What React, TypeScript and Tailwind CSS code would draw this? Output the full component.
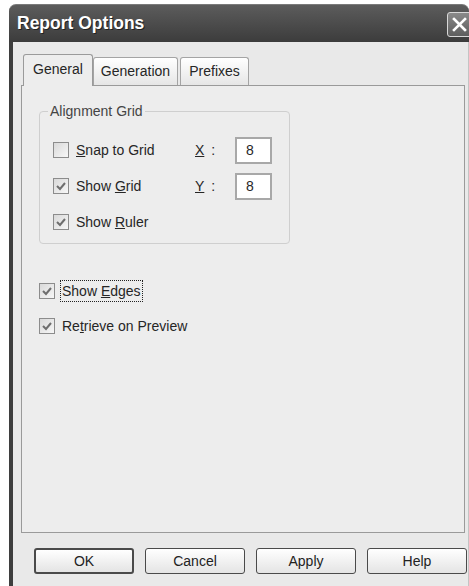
import type { ReactNode } from 'react';

const font = { fontFamily: '"Liberation Sans", Arial, sans-serif' };

function Check({ checked }: { checked: boolean }) {
  return (
    <span className="flex h-[16px] w-[16px] shrink-0 items-center justify-center border border-[#8c8c8c] bg-gradient-to-br from-[#d9d9d9] to-[#f7f7f7]">
      {checked && (
        <svg width="12" height="12" viewBox="0 0 12 12">
          <polyline points="2,6 5,9 10,3" fill="none" stroke="#6e6e6e" strokeWidth="2" />
        </svg>
      )}
    </span>
  );
}

function CheckRow({ checked, focused, children }: { checked: boolean; focused?: boolean; children: ReactNode }) {
  return (
    <div className="flex items-center gap-[5px]">
      <Check checked={checked} />
      <span
        className={
          focused
            ? 'border border-dotted border-[#222] px-px py-[2px] leading-[16px]'
            : 'border border-transparent px-px py-[2px] leading-[16px]'
        }
      >
        {children}
      </span>
    </div>
  );
}

function NumField({ label, value }: { label: ReactNode; value: string }) {
  return (
    <div className="flex items-center">
      <span className="flex w-[40px]">
        {label}
        <span className="ml-[7px]">:</span>
      </span>
      <div className="flex h-[27px] w-[37px] items-center border-2 border-[#a8a8a8] bg-white pl-[9px]">{value}</div>
    </div>
  );
}

function Button({ children, isDefault }: { children: ReactNode; isDefault?: boolean }) {
  return (
    <button
      className={
        'flex h-[26px] w-[100px] items-center justify-center rounded-[3px] bg-gradient-to-b from-white to-[#e4e4e4] text-[14px] text-[#222] ' +
        (isDefault ? 'border-2 border-[#4a4a4a]' : 'border border-[#4a4a4a]')
      }
    >
      {children}
    </button>
  );
}

export default function App() {
  return (
    <div className="h-[586px] w-[469px] overflow-hidden bg-white text-[14px] text-[#262626]" style={font}>
      <div className="ml-[9px] mt-[4px] flex h-[582px] w-[460px] flex-col">
        {/* Title bar */}
        <div className="relative flex h-[38px] shrink-0 items-center rounded-t-[7px] border-t border-[#7a7a7a] bg-gradient-to-b from-[#5c5c5c] via-[#4c4c4c] to-[#3c3c3c] pl-[8px]">
          <span className="text-[17.5px] font-bold text-white [text-shadow:1px_1px_0_#222]">Report Options</span>
          <div className="absolute left-[438px] top-[7px] flex h-[25px] w-[25px] items-center justify-center rounded-[3px] border border-[#d8d8d8] bg-gradient-to-b from-[#8a8a8a] to-[#5e5e5e]">
            <svg width="15" height="15" viewBox="0 0 15 15">
              <path d="M2 2 L13 13 M13 2 L2 13" stroke="white" strokeWidth="2.6" strokeLinecap="square" />
            </svg>
          </div>
        </div>

        {/* Window body */}
        <div className="flex flex-1 flex-col border-l-4 border-r border-l-[#3e3e3e] border-r-[#c4c4c4] bg-[#e9e9e9]">
          <div className="ml-[8px] mr-[3px] mt-[12px] flex flex-col">
            {/* Tabs */}
            <div className="flex items-end pl-[2px]">
              <div className="relative z-10 -mb-px flex h-[32px] w-[70px] items-center justify-center rounded-t-[3px] border border-b-0 border-[#9a9a9a] bg-[#ededed] pb-[2px]">
                General
              </div>
              <div className="flex h-[28px] w-[85px] items-center justify-center rounded-t-[3px] border border-b-0 border-[#a4a4a4] bg-gradient-to-b from-white to-[#e6e6e6]">
                Generation
              </div>
              <div className="ml-[2px] flex h-[28px] w-[69px] items-center justify-center rounded-t-[3px] border border-b-0 border-[#a4a4a4] bg-gradient-to-b from-white to-[#e6e6e6]">
                Prefixes
              </div>
            </div>

            {/* Tab page */}
            <div className="flex h-[448px] flex-col border border-[#9a9a9a] bg-[#ededed] pl-[17px]">
              <fieldset className="mt-[17px] w-[251px] rounded-[4px] border border-[#cfcfcf] pb-[3px]">
                <legend className="ml-[8px] px-[2px] leading-[16px] text-[#444]">Alignment Grid</legend>
                <div className="flex flex-col pl-[13px] pt-[13px]">
                  <div className="flex h-[36px] items-center">
                    <div className="w-[142px]">
                      <CheckRow checked={false}>
                        <u>S</u>nap to Grid
                      </CheckRow>
                    </div>
                    <NumField label={<u>X</u>} value="8" />
                  </div>
                  <div className="flex h-[36px] items-center">
                    <div className="w-[142px]">
                      <CheckRow checked>
                        Show <u>G</u>rid
                      </CheckRow>
                    </div>
                    <NumField label={<u>Y</u>} value="8" />
                  </div>
                  <div className="flex h-[36px] items-center">
                    <CheckRow checked>
                      Show <u>R</u>uler
                    </CheckRow>
                  </div>
                </div>
              </fieldset>

              <div className="mt-[29px] flex flex-col">
                <div className="flex h-[35px] items-center">
                  <CheckRow checked focused>
                    Show <u>E</u>dges
                  </CheckRow>
                </div>
                <div className="flex h-[35px] items-center">
                  <CheckRow checked>
                    Re<u>t</u>rieve on Preview
                  </CheckRow>
                </div>
              </div>
            </div>
          </div>

          {/* Dialog buttons */}
          <div className="ml-[21px] mt-[15px] flex gap-[11px]">
            <Button isDefault>OK</Button>
            <Button>Cancel</Button>
            <Button>Apply</Button>
            <Button>Help</Button>
          </div>
        </div>
      </div>
    </div>
  );
}
